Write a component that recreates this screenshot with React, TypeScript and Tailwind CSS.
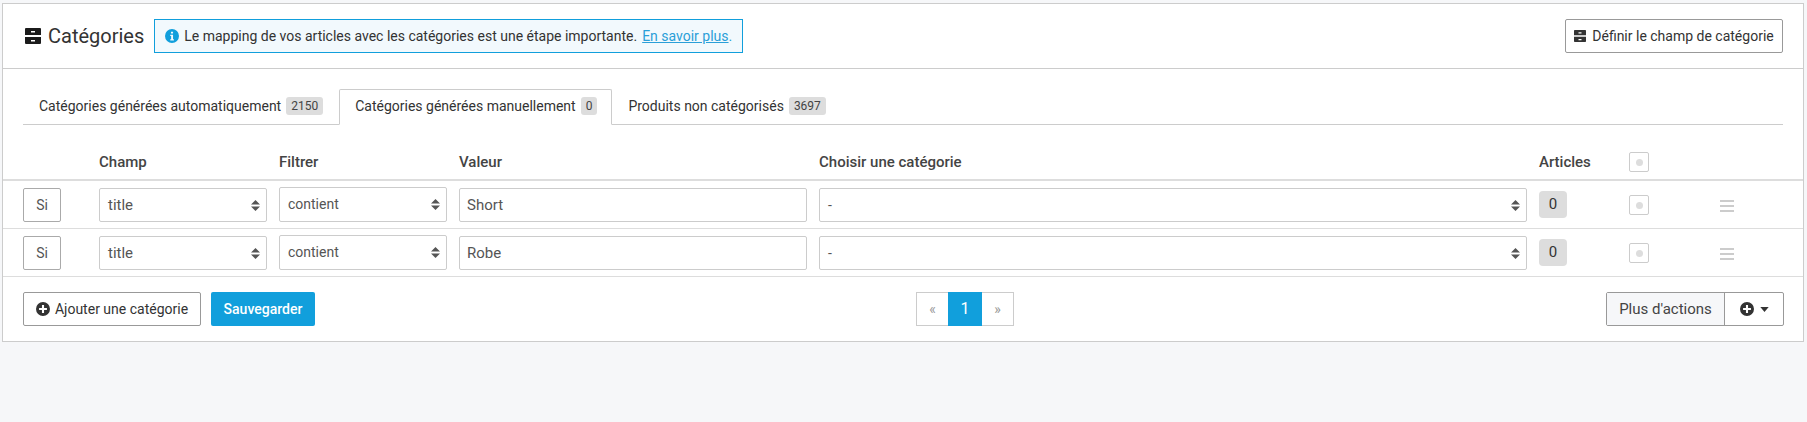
const font = "font-['Roboto',sans-serif]";

function ArchiveIcon({ className }: { className: string }) {
  return (
    <svg viewBox="0 0 16 16" className={className} fill="currentColor">
      <path d="M1 0h14a1 1 0 0 1 1 1v6H0V1a1 1 0 0 1 1-1zM0 9h16v6a1 1 0 0 1-1 1H1a1 1 0 0 1-1-1V9zm6-6v1.500h4V3H6zm0 9v1.500h4V12H6z" fillRule="evenodd" />
    </svg>
  );
}

function PlusCircle() {
  return (
    <svg viewBox="0 0 16 16" className="w-[14px] h-[14px] text-[#333]" fill="currentColor">
      <path fillRule="evenodd" d="M8 0a8 8 0 1 1 0 16A8 8 0 0 1 8 0zM6.800 3.500v3.300H3.500v2.400h3.300v3.300h2.400V9.200h3.300V6.800H9.200V3.500H6.800z" />
    </svg>
  );
}

function SelectBox({ value, className }: { value: string; className: string }) {
  return (
    <div className={`border border-[#ccc] rounded-[2px] bg-white flex items-center justify-between pl-[8px] pr-[6px] text-[#555] ${className}`}>
      <span>{value}</span>
      <svg viewBox="0 0 9 11" className="w-[9px] h-[11px] text-[#555]" fill="currentColor">
        <path d="M4.500 0L9 4.500H0zM4.500 11L0 6.500h9z" />
      </svg>
    </div>
  );
}

function Check() {
  return (
    <div className="w-[20px] h-[20px] border border-[#ccc] rounded-[2px] bg-white flex items-center justify-center">
      <div className="w-[7px] h-[7px] rounded-full bg-[#ddd]" />
    </div>
  );
}

function Row({ value }: { value: string }) {
  return (
    <div className="h-[48px] border-b border-[#ddd] flex items-end pb-[6px] pl-[20px] last:border-[#ccc]">
      <div className="w-[38px] h-[34px] border border-[#aaa] rounded-[2px] flex items-center justify-center text-[14px] text-[#555]">Si</div>
      <SelectBox value="title" className="w-[168px] h-[34px] ml-[38px] text-[15px]" />
      <SelectBox value="contient" className="w-[168px] h-[35px] ml-[12px] text-[14px]" />
      <div className="w-[348px] h-[34px] ml-[12px] border border-[#ccc] rounded-[2px] flex items-center pl-[7px] text-[15px] text-[#555]">{value}</div>
      <SelectBox value="-" className="w-[708px] h-[34px] ml-[12px] text-[14px]" />
      <div className="w-[28px] h-[27px] ml-[12px] mb-[4px] rounded-[4px] bg-[#ddd] flex items-center justify-center text-[15px] text-[#333]">0</div>
      <div className="ml-[62px] mb-[7px]"><Check /></div>
      <div className="ml-[71px] mb-[10px] w-[14px] flex flex-col gap-[3px]">
        <div className="h-[2px] bg-[#ccc]" />
        <div className="h-[2px] bg-[#ccc]" />
        <div className="h-[2px] bg-[#ccc]" />
      </div>
    </div>
  );
}

function Badge({ children }: { children: string }) {
  return <span className="ml-[5px] h-[18px] px-[5px] rounded-[3px] bg-[#ddd] text-[12px] leading-[18px] text-[#444]">{children}</span>;
}

export default function App() {
  return (
    <div className={`min-h-[422px] bg-[#f6f7f9] pt-[3px] pl-[2px] pr-[3px] ${font}`}>
      <div className="bg-white border border-[#ccc] h-[339px]">
        <div className="h-[65px] border-b border-[#ccc] flex items-center pl-[22px] pr-[20px]">
          <ArchiveIcon className="w-[16px] h-[16px] text-[#1b1b1b]" />
          <span className="ml-[7px] text-[20px] text-[#333]">Catégories</span>
          <div className="ml-[10px] h-[34px] w-[589px] border border-[#119fdc] bg-[#f2f9fd] flex items-center pl-[10px] text-[14px] text-[#333]">
            <svg viewBox="0 0 16 16" className="w-[14px] h-[14px] text-[#119fdc]" fill="currentColor">
              <path fillRule="evenodd" d="M8 0a8 8 0 1 1 0 16A8 8 0 0 1 8 0zM6.800 3h2.400v2.200H6.800zM6 6.600h3.200v5h1V13H6v-1.400h1V8H6z" />
            </svg>
            <span className="ml-[5px]">Le mapping de vos articles avec les catégories est une étape importante.</span>
            <span className="ml-[5px] text-[#2a9fd8] underline">En savoir plus</span>
            <span className="text-[#2a9fd8]">.</span>
          </div>
          <button className="ml-auto h-[34px] w-[218px] border border-[#999] rounded-[2px] flex items-center justify-center text-[14px] text-[#333]">
            <ArchiveIcon className="w-[12px] h-[12px] text-[#333]" />
            <span className="ml-[6px]">Définir le champ de catégorie</span>
          </button>
        </div>

        <div className="mx-[20px] mt-[20px] h-[36px] border-b border-[#ccc] flex text-[14px] text-[#333]">
          <div className="h-[36px] pl-[16px] pr-[16px] pb-[2px] flex items-center">
            Catégories générées automatiquement<Badge>2150</Badge>
          </div>
          <div className="h-[36px] pl-[15px] pr-[14px] pb-[2px] flex items-center border border-[#ccc] border-b-white rounded-t-[2px] bg-white">
            Catégories générées manuellement<Badge>0</Badge>
          </div>
          <div className="h-[36px] pl-[16px] pb-[2px] flex items-center">
            Produits non catégorisés<Badge>3697</Badge>
          </div>
        </div>

        <div className="h-[56px] border-b-2 border-[#ddd] flex items-center pl-[96px] pt-[20px] text-[15px] font-medium text-[#444]">
          <span className="w-[180px]">Champ</span>
          <span className="w-[180px]">Filtrer</span>
          <span className="w-[360px]">Valeur</span>
          <span className="w-[720px]">Choisir une catégorie</span>
          <span className="w-[90px]">Articles</span>
          <Check />
        </div>

        <Row value="Short" />
        <Row value="Robe" />

        <div className="flex items-center pl-[20px] pr-[19px] pt-[15px]">
          <button className="h-[34px] w-[178px] border border-[#999] rounded-[2px] flex items-center justify-center text-[14px] text-[#333]">
            <PlusCircle />
            <span className="ml-[5px]">Ajouter une catégorie</span>
          </button>
          <button className="ml-[10px] h-[34px] w-[104px] rounded-[2px] bg-[#119fdc] text-[14px] font-medium text-white">Sauvegarder</button>
          <div className="ml-[601px] h-[34px] flex border border-[#ccc] text-[14px]">
            <span className="w-[31px] flex items-center justify-center text-[#999]">«</span>
            <span className="w-[34px] -my-px flex items-center justify-center bg-[#119fdc] text-white text-[16px]">1</span>
            <span className="w-[31px] flex items-center justify-center text-[#999]">»</span>
          </div>
          <div className="ml-auto h-[34px] flex border border-[#999] rounded-[2px] text-[15px] text-[#444]">
            <span className="w-[118px] flex items-center justify-center bg-[#f6f7f9] border-r border-[#999]">Plus d'actions</span>
            <span className="w-[58px] flex items-center justify-center gap-[6px]">
              <PlusCircle />
              <svg viewBox="0 0 10 6" className="w-[9px] h-[5px] text-[#333]" fill="currentColor"><path d="M0 0h10L5 6z" /></svg>
            </span>
          </div>
        </div>
      </div>
    </div>
  );
}
